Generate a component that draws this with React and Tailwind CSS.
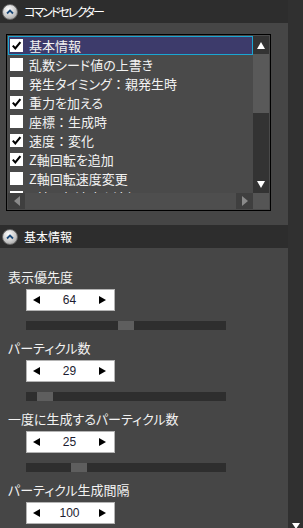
const items = [
  { label: '基本情報', on: true, sel: true },
  { label: '乱数シード値の上書き', on: false },
  { label: '発生タイミング：親発生時', on: false },
  { label: '重力を加える', on: true },
  { label: '座標：生成時', on: false },
  { label: '速度：変化', on: true },
  { label: 'Z軸回転を追加', on: true },
  { label: 'Z軸回転速度変更', on: false },
  { label: 'X軸回転速度を追加', on: false },
]

const params = [
  { label: '表示優先度', value: 64, thumb: 92 },
  { label: 'パーティクル数', value: 29, thumb: 11 },
  { label: '一度に生成するパーティクル数', value: 25, thumb: 45 },
  { label: 'パーティクル生成間隔', value: 100, thumb: null },
]

function Header({ title, tight }) {
  return (
    <div className="h-[23px] bg-[#2d2d2d] flex items-center pl-[2px] gap-[6px] shrink-0">
      <span className="w-[16px] h-[16px] rounded-full border border-[#6a6a6a] bg-[radial-gradient(circle_at_40%_30%,#ffffff,#c4c4c4_60%,#8a8a8a)] flex items-center justify-center">
        <svg width="10" height="10" viewBox="0 0 10 10">
          <path d="M2 6.5 L5 3.5 L8 6.5" stroke="#1d4a78" strokeWidth="1.8" fill="none" />
        </svg>
      </span>
      <span className={`text-[12px] text-white leading-none ${tight ? 'tracking-[-2px]' : ''}`}>{title}</span>
    </div>
  )
}

function Check({ on }) {
  return (
    <span className="w-[13px] h-[13px] bg-white flex items-center justify-center shrink-0">
      {on && (
        <svg width="11" height="11" viewBox="0 0 11 11">
          <path d="M1.8 5.6 L4.3 8.4 L9.4 2.2" stroke="black" strokeWidth="2.1" fill="none" />
        </svg>
      )}
    </span>
  )
}

function Label({ text }) {
  const parts = text.split('：')
  return (
    <span className="text-[13px] text-[#f2f2f2] leading-none whitespace-nowrap">
      {parts.map((p, i) => (
        <span key={i}>
          {i > 0 && <span className="[font-feature-settings:normal]">：</span>}
          {p}
        </span>
      ))}
    </span>
  )
}

function Spin({ value }) {
  return (
    <div className="w-[89px] h-[22px] bg-white border border-[#b4b4b4] flex items-center pl-[6px] pr-[8px]">
      <span className="w-0 h-0 border-y-[4px] border-y-transparent border-r-[7px] border-r-black" />
      <span className="flex-1 text-center text-[12px] text-[#1c1c30] font-['Liberation_Sans',sans-serif] leading-none">{value}</span>
      <span className="w-0 h-0 border-y-[4px] border-y-transparent border-l-[7px] border-l-black" />
    </div>
  )
}

export default function App() {
  return (
    <div className="w-[303px] h-[528px] overflow-hidden flex bg-[#464646] font-['Noto_Sans_CJK_JP',sans-serif] [font-feature-settings:'palt']">
      <div className="w-[288px] flex flex-col">
        <Header title="コマンドセレクター" tight />
        <div className="bg-[#464646] pt-[11px] pb-[14px] pl-[6px]">
          <div className="w-[265px] h-[177px] border border-black p-px bg-[#4a4a4a] flex">
            <div className="w-[245px] flex flex-col">
              <div className="h-[157px] overflow-hidden">
                {items.map((it, i) => (
                  <div
                    key={i}
                    className={`h-[19px] flex items-center gap-[6px] pl-[1px] border ${it.sel ? 'bg-[#3d3b6b] border-[#1aa6d2]' : 'border-transparent'}`}
                  >
                    <Check on={it.on} />
                    <Label text={it.label} />
                  </div>
                ))}
              </div>
              <div className="h-[16px] flex bg-[#4e4e4e]">
                <div className="w-[17px] bg-[#3f3f3f] flex items-center justify-center">
                  <span className="w-0 h-0 border-y-[5px] border-y-transparent border-r-[6px] border-r-[#8a8a8a]" />
                </div>
                <div className="flex-1" />
                <div className="w-[17px] bg-[#3f3f3f] flex items-center justify-center">
                  <span className="w-0 h-0 border-y-[5px] border-y-transparent border-l-[6px] border-l-[#8a8a8a]" />
                </div>
              </div>
            </div>
            <div className="w-[16px] flex flex-col">
              <div className="h-[18px] bg-[#333333] flex items-center justify-center">
                <span className="w-0 h-0 border-x-[4px] border-x-transparent border-b-[7px] border-b-white" />
              </div>
              <div className="h-[59px] bg-[#595959]" />
              <div className="h-[63px] bg-[#333333]" />
              <div className="h-[17px] bg-[#333333] flex items-center justify-center">
                <span className="w-0 h-0 border-x-[4px] border-x-transparent border-t-[7px] border-t-white" />
              </div>
              <div className="flex-1 bg-[#555555]" />
            </div>
          </div>
        </div>
        <Header title="基本情報" />
        <div className="flex-1 pt-[19px] pl-[8px]">
          {params.map((p, i) => (
            <div key={i} className="flex flex-col">
              <div className="h-[18px] flex items-center">
                <Label text={p.label} />
              </div>
              <div className="mt-[4px] pl-[18px]">
                <Spin value={p.value} />
              </div>
              {p.thumb !== null && (
                <div className="mt-[10px] mb-[8px] ml-[18px] w-[200px] h-[9px] bg-[#2e2e2e] flex">
                  <div style={{ width: p.thumb }} />
                  <div className="w-[16px] bg-[#5e5e5e]" />
                </div>
              )}
            </div>
          ))}
        </div>
      </div>
      <div className="w-[15px] bg-[#303030] flex flex-col justify-end items-center">
        <span className="w-0 h-0 border-x-[4px] border-x-transparent border-t-[6px] border-t-white mb-[-1px]" />
      </div>
    </div>
  )
}
